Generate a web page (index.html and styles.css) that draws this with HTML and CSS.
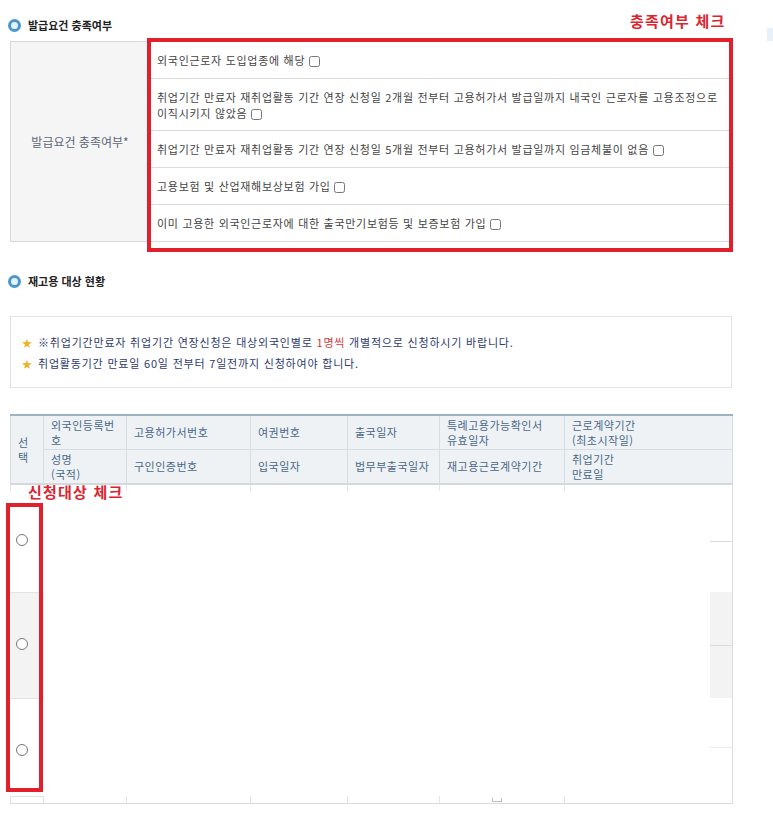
FILE: index.html
```html
<!DOCTYPE html>
<html lang="ko">
<head>
  <meta charset="UTF-8">
  <title>재고용 신청</title>
  <link rel="stylesheet" href="styles.css">
</head>
<body>
  <div class="page">
    <!-- 발급요건 -->
    <h3 class="sec-title"><span class="dot"></span>발급요건 충족여부</h3>
    <table class="req">
      <tr>
        <th rowspan="5">발급요건 충족여부*</th>
        <td class="h1">외국인근로자 도입업종에 해당 <input type="checkbox"></td>
      </tr>
      <tr>
        <td class="h2">취업기간 만료자 재취업활동 기간 연장 신청일 2개월 전부터 고용허가서 발급일까지 내국인 근로자를 고용조정으로 이직시키지 않았음 <input type="checkbox"></td>
      </tr>
      <tr>
        <td class="h3">취업기간 만료자 재취업활동 기간 연장 신청일 5개월 전부터 고용허가서 발급일까지 임금체불이 없음 <input type="checkbox"></td>
      </tr>
      <tr>
        <td class="h1">고용보험 및 산업재해보상보험 가입 <input type="checkbox"></td>
      </tr>
      <tr>
        <td class="h1">이미 고용한 외국인근로자에 대한 출국만기보험등 및 보증보험 가입 <input type="checkbox"></td>
      </tr>
    </table>

    <!-- 재고용 대상 -->
    <h3 class="sec-title second"><span class="dot"></span>재고용 대상 현황</h3>
    <div class="notice">
      <p><span class="star">★</span>※취업기간만료자 취업기간 연장신청은 대상외국인별로 <em>1명씩</em> 개별적으로 신청하시기 바랍니다.</p>
      <p><span class="star">★</span>취업활동기간 만료일 60일 전부터 7일전까지 신청하여야 합니다.</p>
    </div>

    <table class="list">
      <colgroup>
        <col style="width:33px"><col style="width:83px"><col style="width:124px"><col style="width:97px">
        <col style="width:92px"><col style="width:125px"><col style="width:168px">
      </colgroup>
      <thead>
        <tr>
          <th rowspan="2">선택</th>
          <th>외국인등록번호</th>
          <th>고용허가서번호</th>
          <th>여권번호</th>
          <th>출국일자</th>
          <th>특례고용가능확인서<br>유효일자</th>
          <th>근로계약기간<br>(최초시작일)</th>
        </tr>
        <tr>
          <th>성명<br>(국적)</th>
          <th>구인인증번호</th>
          <th>입국일자</th>
          <th>법무부출국일자</th>
          <th>재고용근로계약기간</th>
          <th>취업기간<br>만료일</th>
        </tr>
      </thead>
      <tbody>
        <tr class="tick">
          <td></td><td></td><td></td><td></td><td></td><td></td><td></td>
        </tr>
        <tr class="row r1">
          <td class="sel"><input type="radio" name="pick"></td>
          <td colspan="5"></td>
          <td class="last"><div class="edge"><div></div><div></div></div></td>
        </tr>
        <tr class="row r2 alt">
          <td class="sel"><input type="radio" name="pick"></td>
          <td colspan="5"></td>
          <td class="last"><div class="edge"><div></div><div></div></div></td>
        </tr>
        <tr class="row r3">
          <td class="sel"><input type="radio" name="pick"></td>
          <td colspan="5"></td>
          <td class="last"><div class="edge"><div></div><div></div></div></td>
        </tr>
        <tr class="tick bottom">
          <td></td><td></td><td></td><td></td><td></td><td><span class="cal"></span></td><td></td>
        </tr>
      </tbody>
    </table>

    <!-- 표시 -->
    <span class="note note-top">충족여부 체크</span>
    <div class="mark mark-top"></div>
    <span class="note note-sel">신청대상 체크</span>
    <div class="mark mark-sel"></div>
  </div>
  <div class="side"></div>
</body>
</html>
```

FILE: styles.css
```css
body {
  margin: 0;
  font-family: "Noto Sans CJK KR", "Noto Sans", sans-serif;
  color: #333;
  background: #fff;
}
.page {
  position: relative;
  width: 722px;
  padding: 17px 10px 20px;
}
.side {
  position: absolute;
  top: 28px;
  left: 767px;
  width: 6px;
  height: 13px;
  background: #e8f0f9;
}
.sec-title {
  display: flex;
  align-items: center;
  gap: 7px;
  margin: 0 0 8px -2px;
  font-size: 11px;
  font-weight: 700;
  line-height: 16px;
  color: #222;
}
.sec-title.second {
  margin-top: 31px;
  margin-bottom: 27px;
}
.dot {
  width: 7px;
  height: 7px;
  border: 3px solid #4b97cc;
  border-radius: 50%;
  background: #e6f1f9;
}
.req {
  width: 100%;
  border-collapse: collapse;
  font-size: 11px;
  color: #444;
}
.req th {
  width: 136px;
  background: #f5f5f5;
  border: 1px solid #d9d9d9;
  font-weight: 400;
  font-size: 12px;
  color: #5a6878;
}
.req td {
  border-top: 1px solid #dcdcdc;
  border-bottom: 1px solid #dcdcdc;
  padding: 0 7px;
  line-height: 16px;
  letter-spacing: 0.7px;
}
.req td.h1 { height: 36px; }
.req td.h2 { height: 51px; }
.req td.h3 { height: 36px; }
.req input {
  width: 11px;
  height: 11px;
  margin: 0;
  vertical-align: -2px;
}
.notice {
  border: 1px solid #e3e3e3;
  padding: 15px 11px 13px;
  margin-bottom: 26px;
  font-size: 11px;
  line-height: 20px;
  color: #2e3b6c;
  letter-spacing: 0.8px;
}
.notice p {
  margin: 0;
}
.notice em {
  font-style: normal;
  color: #d23a3a;
}
.star {
  color: #f0b020;
  font-size: 10px;
  margin-right: 6px;
  letter-spacing: 0;
}
.list {
  width: 100%;
  border-collapse: collapse;
  table-layout: fixed;
  font-size: 11px;
}
.list thead th {
  background: #eef2f5;
  border: 1px solid #d6dee5;
  color: #4a6889;
  font-weight: 400;
  text-align: left;
  padding: 0 5px 0 7px;
  line-height: 15px;
  height: 33px;
  letter-spacing: 0.5px;
}
.list thead tr:first-child th {
  border-top: 2px solid #9db2c4;
}
.list thead tr:last-child th,
.list thead th[rowspan] {
  border-bottom: 2px solid #d3d9df;
}
.list td {
  padding: 0;
}
.list .tick td {
  height: 6px;
  border-left: 1px solid #e4e4e4;
}
.list .tick td:last-child {
  border-right: 1px solid #dcdcdc;
}
.list .tick.bottom td {
  border-bottom: 1px solid #dcdcdc;
}
.list .row .sel {
  border-bottom: 1px solid #e2e2e2;
  padding-left: 5px;
}
.list .row.alt .sel {
  background: #f3f3f3;
  border-top: 1px solid #e2e2e2;
}
.list .r3 .sel {
  padding-top: 8px;
}
.list .row input {
  margin: 0;
  width: 12px;
  height: 12px;
}
.list .last {
  border-right: 1px solid #dcdcdc;
}
.edge {
  display: flex;
  flex-direction: column;
  width: 22px;
  margin-left: auto;
}
.edge div {
  flex: 1;
}
.edge div + div {
  border-top: 1px solid #dcdcdc;
}
.r1 .edge { height: 101px; }
.r2 .edge { height: 106px; background: #f3f3f3; }
.r3 .edge { height: 98px; }
.r3 .edge div + div { border-top-color: #ececec; }
.cal {
  display: block;
  width: 8px;
  height: 3px;
  margin: 1px 0 0 52px;
  border: 1px solid #bbb;
  border-top: none;
}
.mark {
  position: absolute;
  box-sizing: border-box;
  border: 4px solid #e0202c;
}
.mark-top {
  left: 147px;
  top: 38px;
  width: 586px;
  height: 214px;
}
.mark-sel {
  left: 6px;
  top: 503px;
  width: 37px;
  height: 289px;
}
.note {
  position: absolute;
  font-size: 15px;
  font-weight: 700;
  line-height: 18px;
  color: #da2530;
  letter-spacing: 1.2px;
}
.note-top {
  left: 630px;
  top: 12px;
}
.note-sel {
  left: 28px;
  top: 483px;
}
```
